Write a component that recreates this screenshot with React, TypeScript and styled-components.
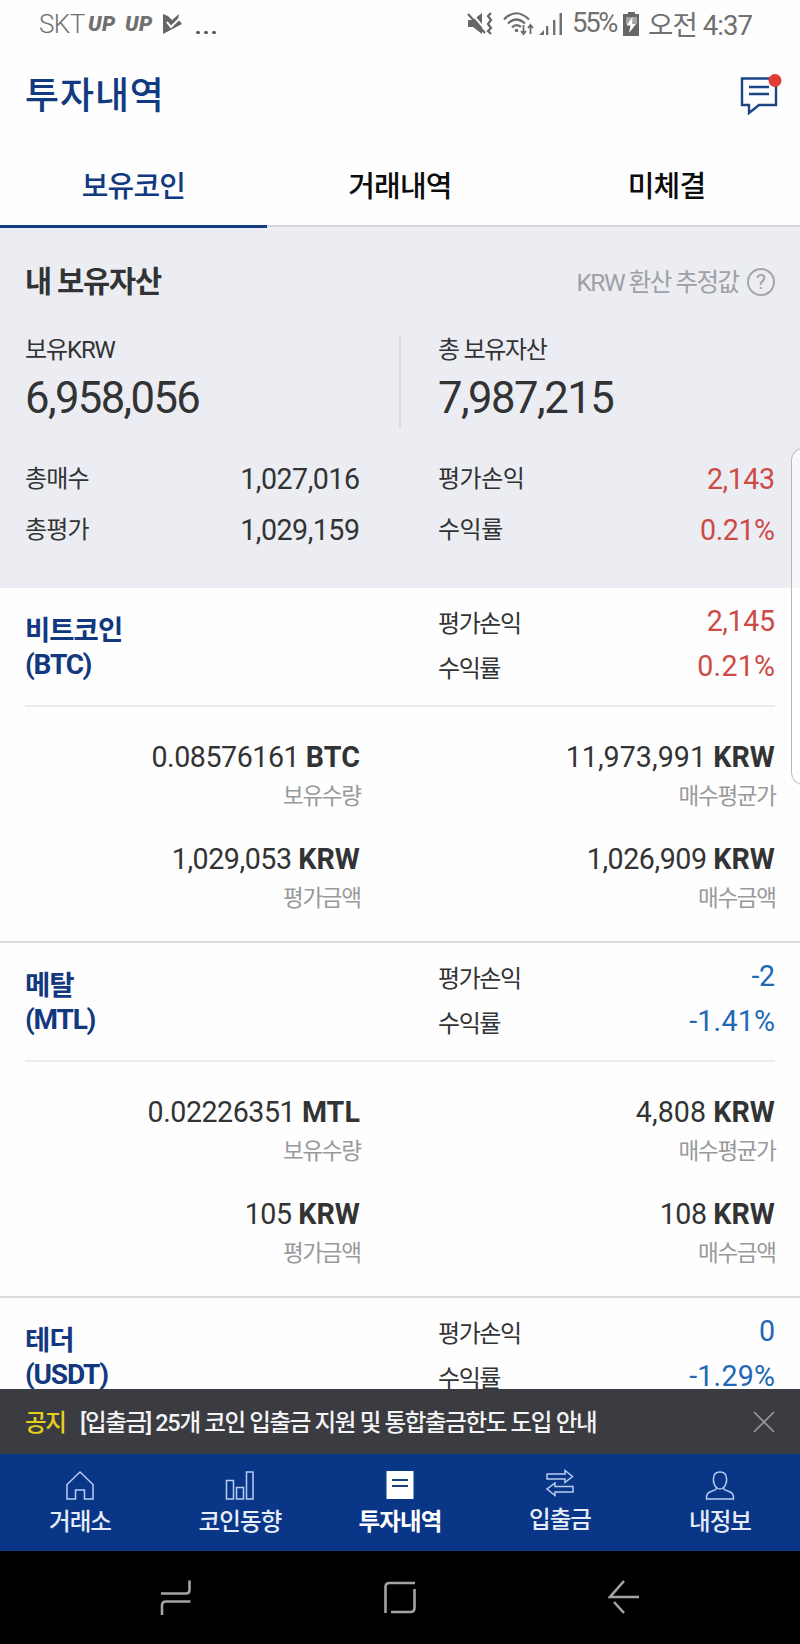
import React from 'react';
import styled, { createGlobalStyle } from 'styled-components';

const Global = createGlobalStyle`
  * { box-sizing: border-box; }
  body { margin: 0; background: #fff; }
  body, button { font-family: Roboto, "Noto Sans CJK KR", sans-serif; }
  svg { display: block; flex: none; }
`;

const Screen = styled.div`
  width: 800px;
  height: 1644px;
  display: flex;
  flex-direction: column;
  overflow: hidden;
  position: relative;
  background: #fefefe;
  color: #323334;
`;

const Text = styled.span<{ $size: number; $ls?: number; $weight?: number; $color?: string }>`
  font-size: ${p => p.$size}px;
  letter-spacing: ${p => p.$ls ?? 0}px;
  margin-right: ${p => -(p.$ls ?? 0)}px;
  font-weight: ${p => p.$weight ?? 400};
  color: ${p => p.$color ?? 'inherit'};
  line-height: 1.2;
  white-space: nowrap;
`;

const StatusBar = styled.header`
  height: 50px;
  flex: none;
  padding: 0 45px 3px 39px;
  display: flex;
  align-items: center;
  justify-content: space-between;
  color: #707070;
`;
const StatusGroup = styled.div`
  display: flex;
  align-items: center;
`;
const Carrier = styled.span`
  font-size: 26px;
  font-weight: 300;
  letter-spacing: -0.6px;
  width: 49px;
`;
const UpMark = styled.span`
  font: italic 900 21px Roboto, sans-serif;
  letter-spacing: 0.5px;
  width: 37px;
`;
const Dots = styled.span`
  display: flex;
  gap: 4.5px;
  margin: 18px 0 0 13px;
`;
const Dot = styled.i`
  width: 3.6px;
  height: 3.6px;
  border-radius: 50%;
  background: #555;
`;
const StatusIcons = styled.div`
  display: flex;
  align-items: center;
  margin-right: 9px;
`;
const WifiSlot = styled.span`
  margin: 0 3px 0 10px;
`;
const StatusText = styled.span<{ $w: number; $ls?: number }>`
  width: ${p => p.$w}px;
  padding-bottom: 2px;
  font-size: 27.5px;
  letter-spacing: ${p => p.$ls ?? -1}px;
  font-weight: 400;
  white-space: nowrap;
`;
const BatterySlot = styled.span`
  margin-right: 8px;
`;

const TitleBar = styled.div`
  height: 97px;
  flex: none;
  padding: 0 18px 3px 25px;
  display: flex;
  align-items: center;
  justify-content: space-between;
  color: #123a80;
`;
const ChatSlot = styled.div`
  padding-bottom: 8px;
`;

const Tabs = styled.nav`
  height: 81px;
  flex: none;
  display: grid;
  grid-template-columns: 267px 266px 267px;
  background: #ebedf3;
`;
const Tab = styled.button<{ $active?: boolean }>`
  border: 0;
  padding: 0 0 4px;
  height: ${p => (p.$active ? 81 : 80)}px;
  background: #fefefe;
  border-bottom: ${p => (p.$active ? '3px solid #143c80' : '2px solid #d5d6da')};
  color: ${p => (p.$active ? '#123a80' : '#0c0c0c')};
  font-size: 29px;
  letter-spacing: -0.8px;
  font-weight: 500;
`;

const Summary = styled.section`
  height: 360px;
  flex: none;
  padding: 29px 25px 0;
  background: #ecedf3;
`;
const SummaryHead = styled.div`
  height: 51px;
  display: flex;
  align-items: center;
  justify-content: space-between;
`;
const Note = styled.div`
  display: flex;
  align-items: center;
  gap: 7px;
`;
const Help = styled.span`
  width: 28px;
  height: 28px;
  border: 2px solid #a5a6a9;
  border-radius: 50%;
  display: flex;
  align-items: center;
  justify-content: center;
  color: #a0a1a4;
  font-size: 21px;
  line-height: 1;
`;
const Totals = styled.div`
  height: 94px;
  margin-top: 27px;
  display: grid;
  grid-template-columns: 374px 2px 1fr;
`;
const Divider = styled.div`
  background: #dcdde2;
`;
const Total = styled.div<{ $right?: boolean }>`
  display: flex;
  flex-direction: column;
  gap: 8px;
  padding: 1px 0 0 ${p => (p.$right ? 37 : 0)}px;
`;
const Pairs = styled.div`
  display: grid;
  grid-template-columns: 335px 337px;
  column-gap: 78px;
  grid-auto-rows: 51px;
  margin-top: 25px;
`;
const Pair = styled.div`
  display: flex;
  align-items: center;
  justify-content: space-between;
`;

const Coin = styled.section`
  height: 355px;
  flex: none;
  border-bottom: 2px solid #dcdcdd;
`;
const CoinHead = styled.div`
  height: 119px;
  margin: 0 25px;
  border-bottom: 2px solid #ececed;
  display: grid;
  grid-template-columns: 413px 337px;
`;
const Name = styled.div`
  padding-top: 26px;
  color: #12387f;
  font-size: 27.5px;
  line-height: 34px;
  letter-spacing: -1px;
  font-weight: 600;
`;
const Ticker = styled.div`
  font-size: 28px;
  letter-spacing: -1.2px;
  font-weight: 700;
`;
const Gains = styled.div`
  padding-top: 11px;
`;
const Gain = styled(Pair)`
  height: 45px;
`;
const GainLabel = styled.span`
  font-size: 24px;
  letter-spacing: -1.4px;
`;
const Details = styled.div`
  margin: 0 25px;
  padding-top: 30px;
  display: grid;
  grid-template-columns: 335px 337px;
  column-gap: 78px;
  grid-auto-rows: 102px;
`;
const Detail = styled.div`
  display: flex;
  flex-direction: column;
  align-items: flex-end;
`;
const Amount = styled.div<{ $wide?: boolean }>`
  height: 40px;
  line-height: 40px;
  font-size: 28.6px;
  letter-spacing: ${p => (p.$wide ? 0.05 : -0.45)}px;
  white-space: nowrap;
`;
const Unit = styled.b`
  letter-spacing: 0.1px;
`;
const DetailLabel = styled.div`
  height: 37px;
  line-height: 38px;
  font-size: 22.5px;
  letter-spacing: -1.3px;
  margin-right: -0.6px;
  color: #98999b;
`;

const CoinList = styled.main`
  flex: 1;
  min-height: 0;
  overflow: hidden;
`;

const Notice = styled.div`
  height: 65px;
  flex: none;
  padding: 0 25px;
  display: flex;
  align-items: center;
  background: #3a3c41;
  color: #f4f4f4;
`;
const Badge = styled.div`
  padding-top: 4px;
`;
const Headline = styled.div`
  flex: 1;
  padding: 4px 0 0 13px;
`;
const TabBar = styled.nav`
  height: 97px;
  flex: none;
  display: grid;
  grid-template-columns: repeat(5, 1fr);
  background: #093687;
`;
const TabItem = styled.button<{ $active?: boolean; $up?: boolean }>`
  border: 0;
  background: none;
  padding: ${p => (p.$up ? 14 : 16)}px 0 0;
  display: flex;
  flex-direction: column;
  align-items: center;
  color: ${p => (p.$active ? '#fff' : '#e6edf8')};
  font-size: 23.5px;
  letter-spacing: -0.9px;
  font-weight: ${p => (p.$active ? 700 : 500)};
  line-height: 44px;
`;
const SystemBar = styled.footer`
  height: 93px;
  flex: none;
  padding: 28px 160px 0;
  display: flex;
  justify-content: space-between;
  background: #000;
`;
const EdgeHandle = styled.div`
  position: absolute;
  left: 791px;
  top: 448px;
  width: 24px;
  height: 337px;
  border: 1.5px solid #b5b6b9;
  border-radius: 13px;
  background: rgba(255, 255, 255, 0.6);
`;

const red = '#cc4b47';
const blue = '#2168b5';

const Num = ({ children, color, ls = -0.45 }: { children: string; color?: string; ls?: number }) => (
  <Text $size={28.6} $ls={ls} $color={color}>{children}</Text>
);
const Label = ({ children, ls = -0.8 }: { children: string; ls?: number }) => (
  <Text $size={24} $ls={ls}>{children}</Text>
);

const PlayIcon = () => (
  <svg width="21" height="22" viewBox="0 0 21 22">
    <path d="M1 1l5 2 4 4 7-6-1 5 4 5L1 21z" fill="#666" />
    <path d="M5 9l4 5 8-8" fill="none" stroke="#fefefe" strokeWidth="2" />
  </svg>
);
const MuteIcon = () => (
  <svg width="26" height="24" viewBox="0 0 26 24" fill="none" stroke="#666">
    <path d="M1 8h5l9-7v21l-9-7H1z" fill="#666" stroke="none" />
    <path d="M3.500 0l16 19" stroke="#fefefe" strokeWidth="2" />
    <path d="M1 2l17 19" strokeWidth="2.200" />
    <path d="M24 1l-3 3 3 4-3 4 3 4-3 3 3 3" strokeWidth="2.200" />
  </svg>
);
const WifiIcon = () => (
  <svg width="33" height="24" viewBox="0 0 33 24" fill="none" stroke="#6c6c6c" strokeWidth="2.2">
    <path d="M1 7.500Q13-5 26 7.500M5 11.500Q13 3.500 22 11.500M9 15.500Q13 11 18 15" />
    <circle cx="13.500" cy="18.500" r="1.800" fill="#6c6c6c" stroke="none" />
    <path d="M20.500 13v9M18 19l2.500 3 2.500-3M27.500 22v-9M25 16l2.500-3 2.500 3" strokeWidth="1.800" />
  </svg>
);
const SignalIcon = () => (
  <svg width="24" height="24" viewBox="0 0 24 24" fill="#707070">
    <path d="M0 23l5-5v5zM7 14h2.300v9H7zM14 8h2.400v15H14zM20.500 1H23v22h-2.500z" />
  </svg>
);
const BatteryIcon = () => (
  <svg width="17" height="24" viewBox="0 0 17 24">
    <path d="M5 0h7v2h4v22H0V2h5z" fill="#666" />
    <path d="M3 5h11v7H3z" fill="#a5a5a5" />
    <path d="M9.500 5L3.500 13.500h4L6 21l7-9H9z" fill="#fff" />
  </svg>
);
const ChatIcon = () => (
  <svg width="42" height="43" viewBox="0 0 42 43" fill="none" stroke="#1d4485" strokeWidth="2.4">
    <path d="M2 6.500h34v26.500H19l-10 8V33H2zM9 15h20M9 22h20" />
    <circle cx="35" cy="8.500" r="6.500" fill="#e23b33" stroke="none" />
  </svg>
);
const NavSvg = ({ children }: { children: React.ReactNode }) => (
  <svg width="30" height="30" viewBox="0 0 30 30" fill="none" stroke="#b9cdf0" strokeWidth="1.5">{children}</svg>
);

type CoinData = {
  name: string; ticker: string; gain: string; rate: string; color: string;
  amount: string; average: string; valuation: string; cost: string;
};
const coins: CoinData[] = [
  { name: '비트코인', ticker: 'BTC', gain: '2,145', rate: '0.21%', color: red, amount: '0.08576161', average: '11,973,991', valuation: '1,029,053', cost: '1,026,909' },
  { name: '메탈', ticker: 'MTL', gain: '-2', rate: '-1.41%', color: blue, amount: '0.02226351', average: '4,808', valuation: '105', cost: '108' },
];

const CoinHeader = ({ c }: { c: Pick<CoinData, 'name' | 'ticker' | 'gain' | 'rate' | 'color'> }) => (
  <CoinHead>
    <Name>{c.name}<Ticker>({c.ticker})</Ticker></Name>
    <Gains>
      <Gain><GainLabel>평가손익</GainLabel><Num color={c.color} ls={-0.4}>{c.gain}</Num></Gain>
      <Gain><GainLabel>수익률</GainLabel><Num color={c.color} ls={0.25}>{c.rate}</Num></Gain>
    </Gains>
  </CoinHead>
);
const DetailCell = ({ value, unit, label, wide }: { value: string; unit: string; label: string; wide?: boolean }) => (
  <Detail>
    <Amount $wide={wide}>{value} <Unit>{unit}</Unit></Amount>
    <DetailLabel>{label}</DetailLabel>
  </Detail>
);

export default function App() {
  return (
    <Screen>
      <Global />
      <StatusBar>
        <StatusGroup>
          <Carrier>SKT</Carrier>
          <UpMark>UP</UpMark>
          <UpMark>UP</UpMark>
          <PlayIcon />
          <Dots><Dot /><Dot /><Dot /></Dots>
        </StatusGroup>
        <StatusGroup>
          <StatusIcons>
            <MuteIcon />
            <WifiSlot><WifiIcon /></WifiSlot>
            <SignalIcon />
          </StatusIcons>
          <StatusText $w={51} $ls={-2.3}>55%</StatusText>
          <BatterySlot><BatteryIcon /></BatterySlot>
          <StatusText $w={107} $ls={-0.9}>오전 4:37</StatusText>
        </StatusGroup>
      </StatusBar>

      <TitleBar>
        <Text $size={37} $ls={0.9} $weight={500}>투자내역</Text>
        <ChatSlot><ChatIcon /></ChatSlot>
      </TitleBar>

      <Tabs>
        <Tab $active>보유코인</Tab>
        <Tab>거래내역</Tab>
        <Tab>미체결</Tab>
      </Tabs>

      <Summary>
        <SummaryHead>
          <Text $size={29.5} $ls={-1.2} $weight={600}>내 보유자산</Text>
          <Note>
            <Text $size={24.5} $ls={-1.5} $color="#9fa0a3">KRW 환산 추정값</Text>
            <Help>?</Help>
          </Note>
        </SummaryHead>
        <Totals>
          <Total>
            <Label ls={-1.1}>보유KRW</Label>
            <Text $size={43.6} $ls={-1.6}>6,958,056</Text>
          </Total>
          <Divider />
          <Total $right>
            <Label ls={-1.3}>총 보유자산</Label>
            <Text $size={43.6} $ls={-1.5}>7,987,215</Text>
          </Total>
        </Totals>
        <Pairs>
          <Pair><Label>총매수</Label><Num ls={-0.5}>1,027,016</Num></Pair>
          <Pair><Label ls={-0.5}>평가손익</Label><Num color={red}>2,143</Num></Pair>
          <Pair><Label>총평가</Label><Num ls={-0.5}>1,029,159</Num></Pair>
          <Pair><Label ls={-0.5}>수익률</Label><Num color={red}>0.21%</Num></Pair>
        </Pairs>
      </Summary>

      <CoinList>
        {coins.map(c => (
          <Coin key={c.ticker}>
            <CoinHeader c={c} />
            <Details>
              <DetailCell value={c.amount} unit={c.ticker} label="보유수량" />
              <DetailCell wide value={c.average} unit="KRW" label="매수평균가" />
              <DetailCell value={c.valuation} unit="KRW" label="평가금액" />
              <DetailCell value={c.cost} unit="KRW" label="매수금액" />
            </Details>
          </Coin>
        ))}
        <CoinHeader c={{ name: '테더', ticker: 'USDT', gain: '0', rate: '-1.29%', color: blue }} />
      </CoinList>

      <Notice>
        <Badge>
          <Text $size={23.5} $ls={-1.3} $weight={500} $color="#e6cf1c">공지</Text>
        </Badge>
        <Headline>
          <Text $size={23.5} $ls={-1.34} $weight={500}>[입출금] 25개 코인 입출금 지원 및 통합출금한도 도입 안내</Text>
        </Headline>
        <svg width="22" height="22" viewBox="0 0 22 22" stroke="#97989b" strokeWidth="1.700"><path d="M1 1l20 20M21 1L1 21" /></svg>
      </Notice>

      <TabBar>
        <TabItem>
          <NavSvg><path d="M2 29V14.500L15 2l13 12.500V29h-8.500v-9h-9v9z" /></NavSvg>거래소
        </TabItem>
        <TabItem>
          <NavSvg><path d="M1.500 10.500h7V29h-7zM11.500 17.500h7V29h-7zM21.500 2H28v27h-6.500z" /></NavSvg>코인동향
        </TabItem>
        <TabItem $active>
          <NavSvg><path d="M1.500 1h27v28h-27z" fill="#fff" stroke="none" /><path d="M7 10h16M7 16h16" stroke="#1d3c7c" strokeWidth="2" /></NavSvg>투자내역
        </TabItem>
        <TabItem $up>
          <NavSvg><path d="M2 6h18V2.500l7.500 6-7.500 6V11H2zM28 18.500H10V15l-8 6 8 6.500V24h18z" /></NavSvg>입출금
        </TabItem>
        <TabItem>
          <NavSvg><path d="M15 2c-9 0-7.500 12-3 16-1 2-3 2.500-6 3.500-4 1.500-4.500 3-4.500 7.500h27c0-4.500-.5-6-4.500-7.500-3-1-5-1.500-6-3.500 4.500-4 6-16-3-16zM12 18q3 2 6 0" /></NavSvg>내정보
        </TabItem>
      </TabBar>

      <SystemBar>
        <svg width="32" height="38" viewBox="0 0 32 38" fill="none" stroke="#a5a4a3" strokeWidth="2.600"><path d="M1 14.500h25q3.500 0 3.500-3.500V1.500M30.500 22.500H6q-4 0-4 4v9.500" /></svg>
        <svg width="34" height="38" viewBox="0 0 34 38" fill="none" stroke="#a5a4a3" strokeWidth="2.600"><path d="M2.500 34V8q0-4 4-4H32M31.500 10v19q0 4-4 4H8" /></svg>
        <svg width="32" height="38" viewBox="0 0 32 38" fill="none" stroke="#a5a4a3" strokeWidth="2.600"><path d="M16 2L2 18h29M6 23l10 11" /></svg>
      </SystemBar>
      <EdgeHandle />
    </Screen>
  );
}
